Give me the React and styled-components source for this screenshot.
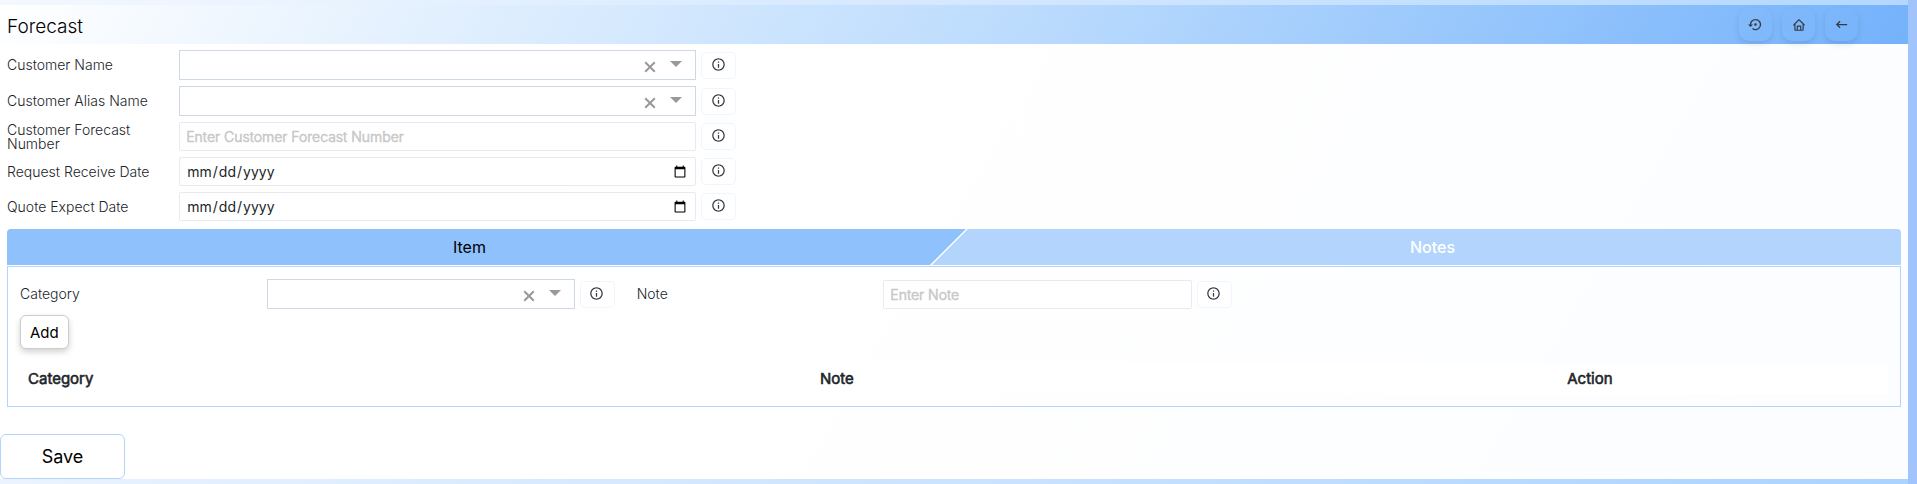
import React, { useState } from 'react';
import styled, { createGlobalStyle } from 'styled-components';
import {
  MdSettingsBackupRestore,
  MdInfoOutline,
  MdKeyboardBackspace
} from 'react-icons/md';
import { BiHome } from 'react-icons/bi';

function InfoButton({ label }) {
  return (
    <Info type="button" aria-label={`About ${label}`}>
      <MdInfoOutline size={15} />
    </Info>
  );
}

function SelectBox({ id }) {
  const [value, setValue] = useState('');
  return (
    <Select.Container>
      <Select.Field
        id={id}
        value={value}
        onChange={e => setValue(e.target.value)}
      >
        <option value="" />
      </Select.Field>
      <Select.Clear
        type="button"
        aria-label="Clear"
        onClick={() => setValue('')}
      >
        <svg width="12" height="12" viewBox="0 0 12 12" aria-hidden="true">
          <path d="M1.2 1.2l9.6 9.6M10.8 1.2l-9.6 9.6" stroke="#999" strokeWidth="2" />
        </svg>
      </Select.Clear>
      <Select.Caret width="12" height="6" viewBox="0 0 12 6" aria-hidden="true">
        <path d="M0 0h12L6 6z" fill="#999" />
      </Select.Caret>
    </Select.Container>
  );
}

function FormField({ id, label, type, placeholder, Row = Field.Row }) {
  return (
    <Row>
      <Field.Label htmlFor={id}>{label}</Field.Label>
      {type === 'select' ? (
        <SelectBox id={id} />
      ) : (
        <Field.Input id={id} type={type} placeholder={placeholder} />
      )}
      <InfoButton label={label} />
    </Row>
  );
}

export default function App() {
  const [tab, setTab] = useState('item');
  return (
    <Page>
      <GlobalStyle />
      <Sheet>
        <Header.Container>
          <Header.Title>Forecast</Header.Title>
          <Header.Actions>
            <Header.Button type="button" aria-label="Reset">
              <MdSettingsBackupRestore size={15} />
            </Header.Button>
            <Header.Button type="button" aria-label="Home">
              <BiHome size={14} />
            </Header.Button>
            <Header.Button type="button" aria-label="Back">
              <MdKeyboardBackspace size={15} />
            </Header.Button>
          </Header.Actions>
        </Header.Container>

        <Fields>
          <FormField id="customerName" label="Customer Name" type="select" />
          <FormField id="aliasName" label="Customer Alias Name" type="select" />
          <FormField
            id="forecastNumber"
            label="Customer Forecast Number"
            type="text"
            placeholder="Enter Customer Forecast Number"
          />
          <FormField id="receiveDate" label="Request Receive Date" type="date" />
          <FormField id="expectDate" label="Quote Expect Date" type="date" />
        </Fields>

        <Tabs.Container>
          <Tabs.List role="tablist">
            <Tabs.Item
              type="button"
              role="tab"
              aria-selected={tab === 'item'}
              onClick={() => setTab('item')}
            >
              Item
            </Tabs.Item>
            <Tabs.Notes
              type="button"
              role="tab"
              aria-selected={tab === 'notes'}
              onClick={() => setTab('notes')}
            >
              Notes
            </Tabs.Notes>
          </Tabs.List>
          <Tabs.Panel role="tabpanel">
            <ItemFields>
              <FormField
                id="category"
                label="Category"
                type="select"
                Row={Field.ItemRow}
              />
              <FormField
                id="note"
                label="Note"
                type="text"
                placeholder="Enter Note"
                Row={Field.ItemRow}
              />
            </ItemFields>
            <AddButton type="button">Add</AddButton>
            <Table.Container>
              <thead>
                <tr>
                  <Table.Head width="42.4%">Category</Table.Head>
                  <Table.Head width="40%">Note</Table.Head>
                  <Table.Head>Action</Table.Head>
                </tr>
              </thead>
            </Table.Container>
          </Tabs.Panel>
        </Tabs.Container>

        <SaveButton type="button">Save</SaveButton>
      </Sheet>
    </Page>
  );
}

const GlobalStyle = createGlobalStyle`
  * {
    box-sizing: border-box;
  }
  body {
    margin: 0;
    background: #a1c4fd;
    font-family: Inter, sans-serif;
    color: #212529;
  }
  button, input, select {
    font-family: inherit;
  }
  button {
    cursor: pointer;
  }
`;

const Page = styled.main`
  min-height: 100vh;
  display: flex;
  margin-right: 9px;
  padding: 5px 0;
  background: linear-gradient(120deg, #f4f8ff 0%, #aad3ff 100%);
`;

const Sheet = styled.div`
  flex: 1;
  display: flex;
  flex-direction: column;
  background: linear-gradient(120deg, #ffffff 30%, #fcfdff 100%);
`;

const Header = {
  Container: styled.header`
    height: 39px;
    display: flex;
    align-items: center;
    justify-content: space-between;
    padding: 0 50px 0 7px;
    background: linear-gradient(120deg, #ffffff 0%, #bbdbfd 54%, #74b2fb 100%);
  `,
  Title: styled.h1`
    margin: 0;
    padding-top: 4px;
    font-size: 19px;
    font-weight: 300;
    line-height: 24px;
    color: #000;
  `,
  Actions: styled.div`
    display: flex;
    gap: 10px;
  `,
  Button: styled.button`
    width: 33px;
    height: 33px;
    display: flex;
    align-items: center;
    justify-content: center;
    padding: 0;
    border: none;
    border-radius: 10px;
    background: transparent;
    box-shadow: 0 3px 6px rgba(0, 0, 0, 0.1);
    color: #343a40;
  `
};

const Fields = styled.section`
  width: 39%;
  display: flex;
  flex-direction: column;
  gap: 6px;
  padding: 6px 8px 8px 7px;
`;

const Field = {
  Row: styled.div`
    display: grid;
    grid-template-columns: 1fr 3fr 40px;
    align-items: center;
  `,
  ItemRow: styled.div`
    display: grid;
    grid-template-columns: 40% 50% 40px;
    align-items: center;
  `,
  Label: styled.label`
    padding-right: 24px;
    font-size: 14px;
    font-weight: 300;
    line-height: 14px;
    color: #212529;
  `,
  Input: styled.input`
    width: 100%;
    height: 29px;
    padding: 0 6px;
    border: 1px solid #e9e9f0;
    border-radius: 2px;
    background: #fff;
    font-size: 14px;
    color: #212529;
    &::placeholder {
      color: #c8c8c8;
      font-weight: 300;
      -webkit-text-stroke: 0.6px #c8c8c8;
    }
  `
};

const Select = {
  Container: styled.div`
    height: 30px;
    display: flex;
    align-items: center;
    padding-right: 13px;
    border: 1px solid #ced9e5;
    background: #fff;
  `,
  Field: styled.select`
    flex: 1;
    min-width: 0;
    height: 100%;
    border: none;
    background: transparent;
    appearance: none;
    font-size: 14px;
  `,
  Clear: styled.button`
    display: flex;
    padding: 4px 0 0;
    border: none;
    background: transparent;
  `,
  Caret: styled.svg`
    margin: 0 0 2px 14px;
  `
};

const Info = styled.button`
  width: 35px;
  height: 27px;
  display: flex;
  align-items: center;
  justify-content: center;
  justify-self: end;
  padding: 0 1px 2px 0;
  border: 1px solid #eff5ff;
  border-radius: 5px;
  background: #fff;
  color: #343a40;
`;

const Tabs = {
  Container: styled.section`
    margin: 0 7px;
  `,
  List: styled.div`
    height: 37px;
    display: flex;
    padding-bottom: 1px;
    border-radius: 4px 4px 0 0;
    overflow: hidden;
  `,
  Item: styled.button`
    flex: 1 1 auto;
    padding: 0 34px 0 0;
    border: none;
    background: #8fc1fc;
    clip-path: polygon(0 0, 100% 0, calc(100% - 36px) 100%, 0 100%);
    font-size: 16px;
    color: #000;
  `,
  Notes: styled.button`
    flex: 1 1 auto;
    margin-left: -34px;
    padding: 0 0 0 32px;
    border: none;
    background: #b3d5fd;
    clip-path: polygon(36px 0, 100% 0, 100% 100%, 0 100%);
    font-size: 16px;
    font-weight: 500;
    color: #fff;
  `,
  Panel: styled.div`
    padding: 12px;
    border: 1px solid #b3d5fd;
  `
};

const ItemFields = styled.div`
  display: grid;
  grid-template-columns: repeat(3, 1fr);
  align-items: center;
  padding-right: 18px;
`;

const AddButton = styled.button`
  display: block;
  height: 34px;
  margin-top: 6px;
  padding: 0 9px;
  border: 1px solid #ccc;
  border-radius: 6px;
  background: #fff;
  box-shadow: 0 3px 6px rgba(0, 0, 0, 0.18);
  font-size: 15px;
  color: #000;
`;

const Table = {
  Container: styled.table`
    width: 100%;
    margin-top: 14px;
    border-collapse: collapse;
    table-layout: fixed;
    background: #fff;
  `,
  Head: styled.th`
    padding: 4px 8px;
    font-size: 15px;
    font-weight: 400;
    line-height: 23px;
    text-align: left;
    -webkit-text-stroke: 0.6px #212529;
  `
};

const SaveButton = styled.button`
  width: 125px;
  height: 45px;
  margin-top: 27px;
  border: 1px solid #b3d5fd;
  border-radius: 6px;
  background: #fff;
  font-size: 18px;
  color: #000;
`;
